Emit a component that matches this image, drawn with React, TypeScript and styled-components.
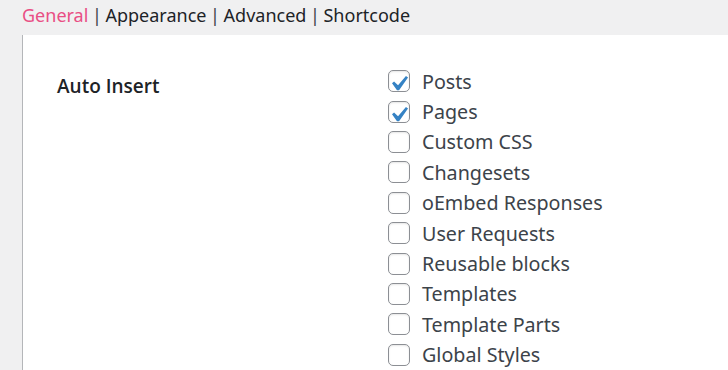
import React, { useState } from "react";
import styled, { createGlobalStyle } from "styled-components";

const GlobalStyle = createGlobalStyle`
  html, body {
    margin: 0;
    padding: 0;
    background: #f0f0f1;
    font-family: "Noto Sans", "Open Sans", sans-serif;
    overflow: hidden;
  }
`;

const tabs = ["General", "Appearance", "Advanced", "Shortcode"];

const initialTypes = [
  { label: "Posts", checked: true },
  { label: "Pages", checked: true },
  { label: "Custom CSS", checked: false },
  { label: "Changesets", checked: false },
  { label: "oEmbed Responses", checked: false },
  { label: "User Requests", checked: false },
  { label: "Reusable blocks", checked: false },
  { label: "Templates", checked: false },
  { label: "Template Parts", checked: false },
  { label: "Global Styles", checked: false },
];

const App: React.FC = () => {
  const [active, setActive] = useState("General");
  const [types, setTypes] = useState(initialTypes);

  const toggle = (index: number) => () => {
    setTypes((prev) =>
      prev.map((item, i) =>
        i === index ? { ...item, checked: !item.checked } : item
      )
    );
  };

  return (
    <>
      <GlobalStyle />
      <Page>
        <TabBar>
          {tabs.map((tab, index) => (
            <React.Fragment key={tab}>
              {index > 0 && <Separator>|</Separator>}
              <Tab $active={tab === active} onClick={() => setActive(tab)}>
                {tab}
              </Tab>
            </React.Fragment>
          ))}
        </TabBar>
        <Panel>
          <FieldLabel>Auto Insert</FieldLabel>
          <CheckList>
            {types.map((item, index) => (
              <CheckRow key={item.label}>
                <Box onClick={toggle(index)}>
                  {item.checked && (
                    <CheckMark viewBox="3.18 1 14.28 14.28">
                      <path
                        d="M14.83 4.89l1.34.94-5.81 8.38H9.02L5.78 9.67l1.34-1.25 2.57 2.4z"
                        fill="#3582c4"
                      />
                    </CheckMark>
                  )}
                </Box>
                <CheckLabel onClick={toggle(index)}>{item.label}</CheckLabel>
              </CheckRow>
            ))}
          </CheckList>
        </Panel>
      </Page>
    </>
  );
};

export default App;

const Page = styled.div`
  width: 728px;
  height: 370px;
  display: flex;
  flex-direction: column;
`;

const TabBar = styled.div`
  height: 35px;
  box-sizing: border-box;
  display: flex;
  align-items: center;
  padding: 0 0 6px 22px;
  font-size: 18px;
  color: #1d2327;
  white-space: nowrap;
`;

const Tab = styled.span<{ $active: boolean }>`
  color: ${({ $active }) => ($active ? "#e94e84" : "#1d2327")};
  cursor: pointer;
`;

const Separator = styled.span`
  margin: 0 3.6px;
  color: #3c434a;
`;

const Panel = styled.div`
  flex: 1;
  margin-left: 22px;
  background: #fff;
  border-left: 1px solid #b4b6b9;
  display: grid;
  grid-template-columns: 331px 1fr;
  align-items: start;
  padding: 0 0 0 34px;
`;

const FieldLabel = styled.div`
  padding-top: 38px;
  font-family: "Open Sans", "Noto Sans", sans-serif;
  font-size: 19px;
  font-weight: 600;
  color: #1d2327;
`;

const CheckList = styled.div`
  padding-top: 31px;
  display: flex;
  flex-direction: column;
`;

const CheckRow = styled.div`
  height: 30.4px;
  display: flex;
  align-items: center;
  gap: 12px;
`;

const Box = styled.span`
  position: relative;
  width: 22px;
  height: 22px;
  box-sizing: border-box;
  border: 1px solid #8c8f94;
  border-radius: 5px;
  background: #fff;
  cursor: pointer;
  box-shadow: inset 0 1px 2px rgba(0, 0, 0, 0.1);
`;

const CheckMark = styled.svg`
  position: absolute;
  top: -1px;
  left: -1px;
  width: 22px;
  height: 22px;
`;

const CheckLabel = styled.span`
  font-size: 19.7px;
  color: #3c434a;
  cursor: pointer;
`;
